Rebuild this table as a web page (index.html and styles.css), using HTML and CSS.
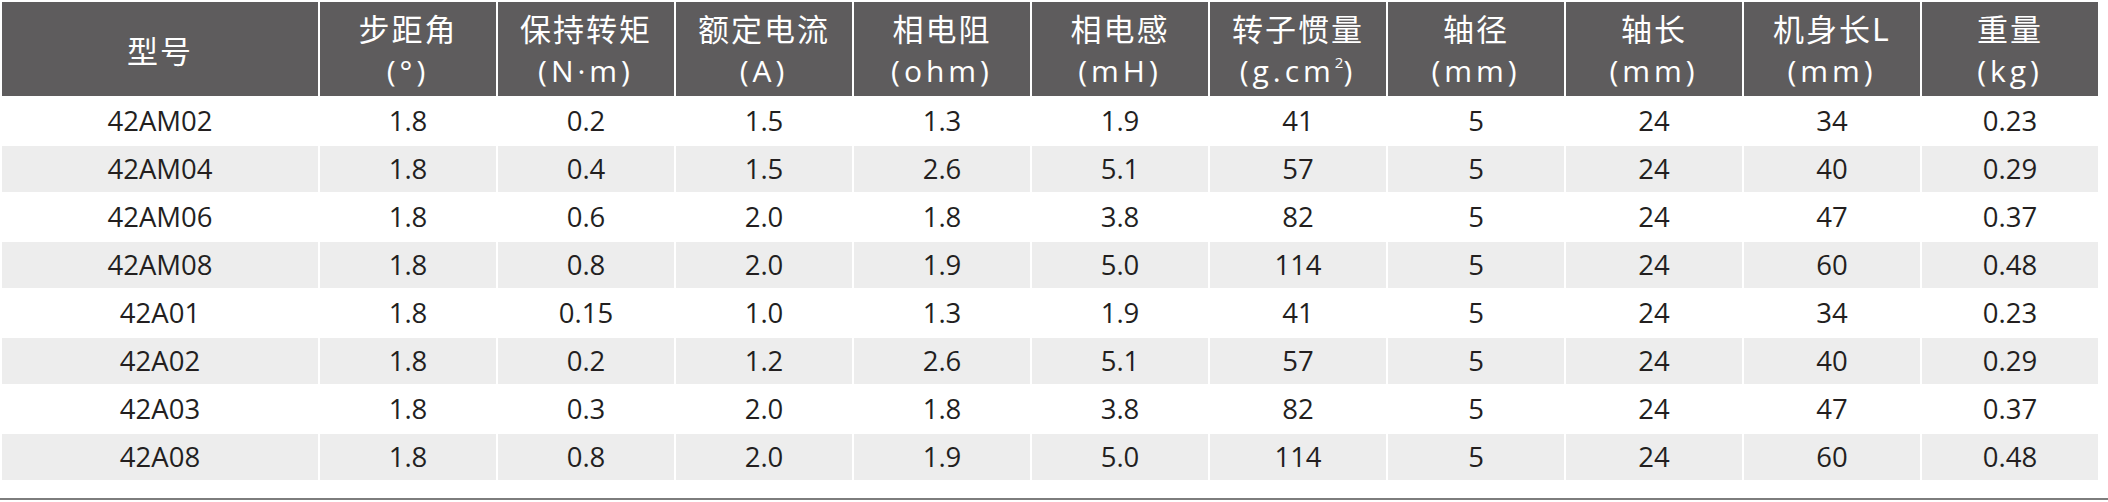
FILE: index.html
```html
<!DOCTYPE html>
<html lang="zh-CN">
<head>
<meta charset="utf-8">
<title>42系列步进电机参数</title>
<link rel="stylesheet" href="styles.css">
</head>
<body>
<div class="page">
  <table class="spec">
    <colgroup>
      <col class="col-model">
      <col><col><col><col><col><col><col><col><col><col>
    </colgroup>
    <thead>
      <tr>
        <th>型号</th>
        <th>步距角<br><span class="unit">(°)</span></th>
        <th>保持转矩<br><span class="unit">(N·m)</span></th>
        <th>额定电流<br><span class="unit">(A)</span></th>
        <th>相电阻<br><span class="unit">(ohm)</span></th>
        <th>相电感<br><span class="unit">(mH)</span></th>
        <th>转子惯量<br><span class="unit">(g.cm<sup>2</sup>)</span></th>
        <th>轴径<br><span class="unit">(mm)</span></th>
        <th>轴长<br><span class="unit">(mm)</span></th>
        <th>机身长L<br><span class="unit">(mm)</span></th>
        <th>重量<br><span class="unit">(kg)</span></th>
      </tr>
    </thead>
    <tbody>
      <tr><td>42AM02</td><td>1.8</td><td>0.2</td><td>1.5</td><td>1.3</td><td>1.9</td><td>41</td><td>5</td><td>24</td><td>34</td><td>0.23</td></tr>
      <tr><td>42AM04</td><td>1.8</td><td>0.4</td><td>1.5</td><td>2.6</td><td>5.1</td><td>57</td><td>5</td><td>24</td><td>40</td><td>0.29</td></tr>
      <tr><td>42AM06</td><td>1.8</td><td>0.6</td><td>2.0</td><td>1.8</td><td>3.8</td><td>82</td><td>5</td><td>24</td><td>47</td><td>0.37</td></tr>
      <tr><td>42AM08</td><td>1.8</td><td>0.8</td><td>2.0</td><td>1.9</td><td>5.0</td><td>114</td><td>5</td><td>24</td><td>60</td><td>0.48</td></tr>
      <tr><td>42A01</td><td>1.8</td><td>0.15</td><td>1.0</td><td>1.3</td><td>1.9</td><td>41</td><td>5</td><td>24</td><td>34</td><td>0.23</td></tr>
      <tr><td>42A02</td><td>1.8</td><td>0.2</td><td>1.2</td><td>2.6</td><td>5.1</td><td>57</td><td>5</td><td>24</td><td>40</td><td>0.29</td></tr>
      <tr><td>42A03</td><td>1.8</td><td>0.3</td><td>2.0</td><td>1.8</td><td>3.8</td><td>82</td><td>5</td><td>24</td><td>47</td><td>0.37</td></tr>
      <tr><td>42A08</td><td>1.8</td><td>0.8</td><td>2.0</td><td>1.9</td><td>5.0</td><td>114</td><td>5</td><td>24</td><td>60</td><td>0.48</td></tr>
    </tbody>
  </table>
  <div class="rule"></div>
</div>
</body>
</html>
```

FILE: styles.css
```css
html, body {
  margin: 0;
  padding: 0;
  background: #ffffff;
}

.page {
  width: 2108px;
  font-family: "Open Sans", "Noto Sans CJK SC", sans-serif;
}

.spec {
  width: 2100px;
  table-layout: fixed;
  border-collapse: separate;
  border-spacing: 2px 2px;
  margin: 0;
}

.col-model {
  width: 316px;
}

.spec th {
  height: 94px;
  padding: 0;
  background: #5e5c5d;
  color: #ffffff;
  font-family: "Noto Sans CJK SC", "Open Sans", sans-serif;
  font-weight: 400;
  font-size: 31px;
  line-height: 41px;
  letter-spacing: 2px;
  text-align: center;
  vertical-align: middle;
}

.spec th .unit {
  font-family: "Open Sans", "Noto Sans CJK SC", sans-serif;
  font-size: 30px;
  letter-spacing: 4px;
}

.spec th sup {
  font-size: 15px;
  line-height: 0;
  vertical-align: 14px;
  letter-spacing: 0;
}

.spec td {
  height: 46px;
  padding: 0;
  color: #231f1f;
  font-size: 27.5px;
  line-height: 30px;
  text-align: center;
  vertical-align: middle;
}

.spec tbody tr:nth-child(even) td {
  background: #ededed;
}

.rule {
  margin-top: 16px;
  height: 2px;
  background: #7d7d7d;
}
```
